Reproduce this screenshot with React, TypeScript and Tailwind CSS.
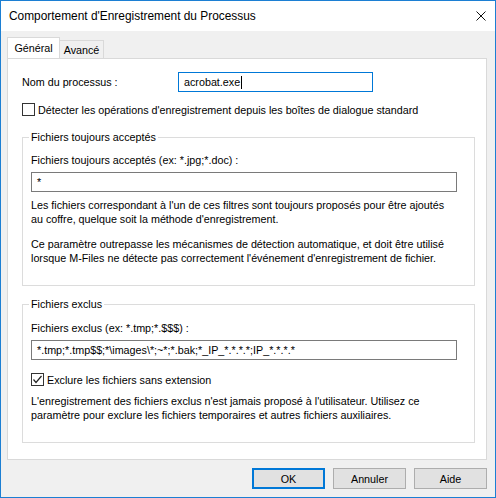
const font = { fontFamily: '"Liberation Sans", Arial, sans-serif' };

function CheckBox({ checked }: { checked?: boolean }) {
  return (
    <div className="w-[13px] h-[13px] border border-[#333333] bg-white flex items-center justify-center shrink-0">
      {checked && (
        <svg width="11" height="11" viewBox="0 0 11 11">
          <polyline points="1.5,5.5 4,8.5 9.5,2" fill="none" stroke="#222" strokeWidth="1.2" />
        </svg>
      )}
    </div>
  );
}

function Button({ label, primary }: { label: string; primary?: boolean }) {
  return (
    <div
      className={
        "w-[73px] h-[21px] bg-[#e1e1e1] flex items-center justify-center text-black " +
        (primary ? "border-2 border-[#0078d7]" : "border border-[#adadad]")
      }
    >
      {label}
    </div>
  );
}

export default function App() {
  return (
    <div
      className="w-[496px] h-[498px] border border-[#1c7fd3] flex flex-col bg-[#f0f0f0] text-black text-[10.75px] leading-[14px]"
      style={font}
    >
      {/* barre de titre */}
      <div className="h-[30px] bg-white flex items-center justify-between pl-[8px] pr-[9px] shrink-0">
        <span className="text-[11.9px]">Comportement d'Enregistrement du Processus</span>
        <svg width="10" height="10" viewBox="0 0 10 10">
          <path d="M0.5 0.5 L9.5 9.5 M9.5 0.5 L0.5 9.5" stroke="#111" strokeWidth="1" />
        </svg>
      </div>

      <div className="flex-1 flex flex-col pl-[6px] pr-[8px] pt-[7px]">
        {/* onglets */}
        <div className="flex items-end h-[20px]">
          <div className="h-[21px] w-[53px] bg-white border border-[#d9d9d9] border-b-0 flex items-center justify-center relative z-10 pb-[1px]">
            Général
          </div>
          <div className="h-[18px] w-[44px] border border-l-0 border-b-0 border-[#d9d9d9] flex items-center justify-center">
            Avancé
          </div>
        </div>

        <div className="h-[402px] bg-white border border-[#d9d9d9] pl-[14px] flex flex-col">
          <div className="flex items-center mt-[13px] h-[20px]">
            <span className="w-[156px]">Nom du processus :</span>
            <div className="w-[195px] h-[20px] border border-[#0078d7] flex items-center pl-[5px]">
              acrobat.exe
              <span className="w-px h-[13px] bg-black ml-[1px]" />
            </div>
          </div>

          <div className="flex items-center gap-[3px] mt-[11px] h-[13px]">
            <CheckBox />
            <span>Détecter les opérations d'enregistrement depuis les boîtes de dialogue standard</span>
          </div>

          <fieldset className="mt-[14px] w-[453px] border border-[#dcdcdc] pl-[8px] pb-[20px]">
            <legend className="ml-[-2px] px-[2px]">Fichiers toujours acceptés</legend>
            <div className="mt-[9px]">Fichiers toujours acceptés (ex: *.jpg;*.doc) :</div>
            <div className="mt-[5px] w-[426px] h-[20px] border border-[#7a7a7a] flex items-center pl-[5px]">*</div>
            <p className="mt-[6px]">
              Les fichiers correspondant à l'un de ces filtres sont toujours proposés pour être ajoutés
              <br />
              au coffre, quelque soit la méthode d'enregistrement.
            </p>
            <p className="mt-[11px]">
              Ce paramètre outrepasse les mécanismes de détection automatique, et doit être utilisé
              <br />
              lorsque M-Files ne détecte pas correctement l'événement d'enregistrement de fichier.
            </p>
          </fieldset>

          <fieldset className="mt-[11px] w-[453px] border border-[#dcdcdc] pl-[8px] pb-[20px]">
            <legend className="ml-[-2px] px-[2px]">Fichiers exclus</legend>
            <div className="mt-[10px]">Fichiers exclus (ex: *.tmp;*.$$$) :</div>
            <div className="mt-[5px] w-[426px] h-[20px] border border-[#7a7a7a] flex items-center pl-[5px]">
              *.tmp;*.tmp$$;*\images\*;~*;*.bak;*_IP_*.*.*.*;IP_*.*.*.*
            </div>
            <div className="flex items-center gap-[3px] mt-[13px] h-[13px]">
              <CheckBox checked />
              <span>Exclure les fichiers sans extension</span>
            </div>
            <p className="mt-[8px]">
              L'enregistrement des fichiers exclus n'est jamais proposé à l'utilisateur. Utilisez ce
              <br />
              paramètre pour exclure les fichiers temporaires et autres fichiers auxiliaires.
            </p>
          </fieldset>
        </div>

        <div className="flex justify-end gap-[8px] mt-[8px]">
          <Button label="OK" primary />
          <Button label="Annuler" />
          <Button label="Aide" />
        </div>
      </div>
    </div>
  );
}
